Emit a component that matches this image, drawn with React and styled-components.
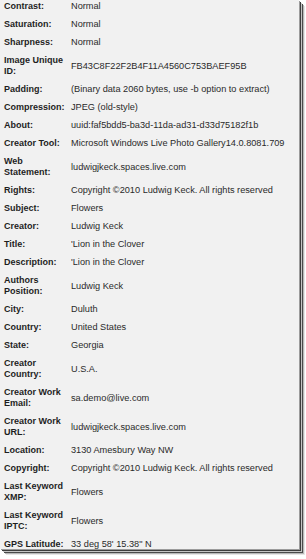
import React from "react";
import styled, { createGlobalStyle } from "styled-components";

const GlobalStyle = createGlobalStyle`
  html, body {
    margin: 0;
    padding: 0;
    background: #ffffff;
  }
  body {
    font-family: "Liberation Sans", Arial, sans-serif;
    color: #222;
  }
`;

const Frame = styled.div`
  width: 306px;
  height: 559px;
  background: #ffffff;
`;

const Panel = styled.div`
  width: 299px;
  height: 549px;
  overflow: hidden;
  background: #f1f1f1;
  box-shadow:
    1px 1px 0 #9c9c9c,
    2px 2px 0 #3c3c3c,
    3px 3px 0 #c4c4c4,
    4px 4px 0 #4a4a4a,
    5px 5px 0 #b8b8b8,
    6px 6px 0 #e6e6e6;
`;

const List = styled.dl`
  margin: -3px 0 0 0;
  padding: 0;
  display: flex;
  flex-direction: column;
`;

const Row = styled.div`
  display: grid;
  grid-template-columns: 64px 1fr;
  column-gap: 3px;
  align-items: center;
  padding: 4px 0 3px 4px;
  min-height: 11px;
`;

const Label = styled.dt`
  margin: 0;
  font-weight: bold;
  font-size: 9px;
  line-height: 11px;
  color: #1e1e1e;
`;

const Value = styled.dd`
  margin: 0;
  font-size: 9.2px;
  line-height: 11px;
  color: #2a2a2a;
  white-space: nowrap;
`;

const fields = [
  ["Contrast:", "Normal"],
  ["Saturation:", "Normal"],
  ["Sharpness:", "Normal"],
  ["Image Unique ID:", "FB43C8F22F2B4F11A4560C753BAEF95B"],
  ["Padding:", "(Binary data 2060 bytes, use -b option to extract)"],
  ["Compression:", "JPEG (old-style)"],
  ["About:", "uuid:faf5bdd5-ba3d-11da-ad31-d33d75182f1b"],
  ["Creator Tool:", "Microsoft Windows Live Photo Gallery14.0.8081.709"],
  ["Web Statement:", "ludwigjkeck.spaces.live.com"],
  ["Rights:", "Copyright \u00a92010 Ludwig Keck. All rights reserved"],
  ["Subject:", "Flowers"],
  ["Creator:", "Ludwig Keck"],
  ["Title:", "'Lion in the Clover"],
  ["Description:", "'Lion in the Clover"],
  ["Authors Position:", "Ludwig Keck"],
  ["City:", "Duluth"],
  ["Country:", "United States"],
  ["State:", "Georgia"],
  ["Creator Country:", "U.S.A."],
  ["Creator Work Email:", "sa.demo@live.com"],
  ["Creator Work URL:", "ludwigjkeck.spaces.live.com"],
  ["Location:", "3130 Amesbury Way NW"],
  ["Copyright:", "Copyright \u00a92010 Ludwig Keck. All rights reserved"],
  ["Last Keyword XMP:", "Flowers"],
  ["Last Keyword IPTC:", "Flowers"],
  ["GPS Latitude:", "33 deg 58' 15.38\" N"],
];

export default function App() {
  return (
    <>
      <GlobalStyle />
      <Frame>
        <Panel>
          <List>
            {fields.map(([label, value]) => (
              <Row key={label}>
                <Label>{label}</Label>
                <Value>{value}</Value>
              </Row>
            ))}
          </List>
        </Panel>
      </Frame>
    </>
  );
}
